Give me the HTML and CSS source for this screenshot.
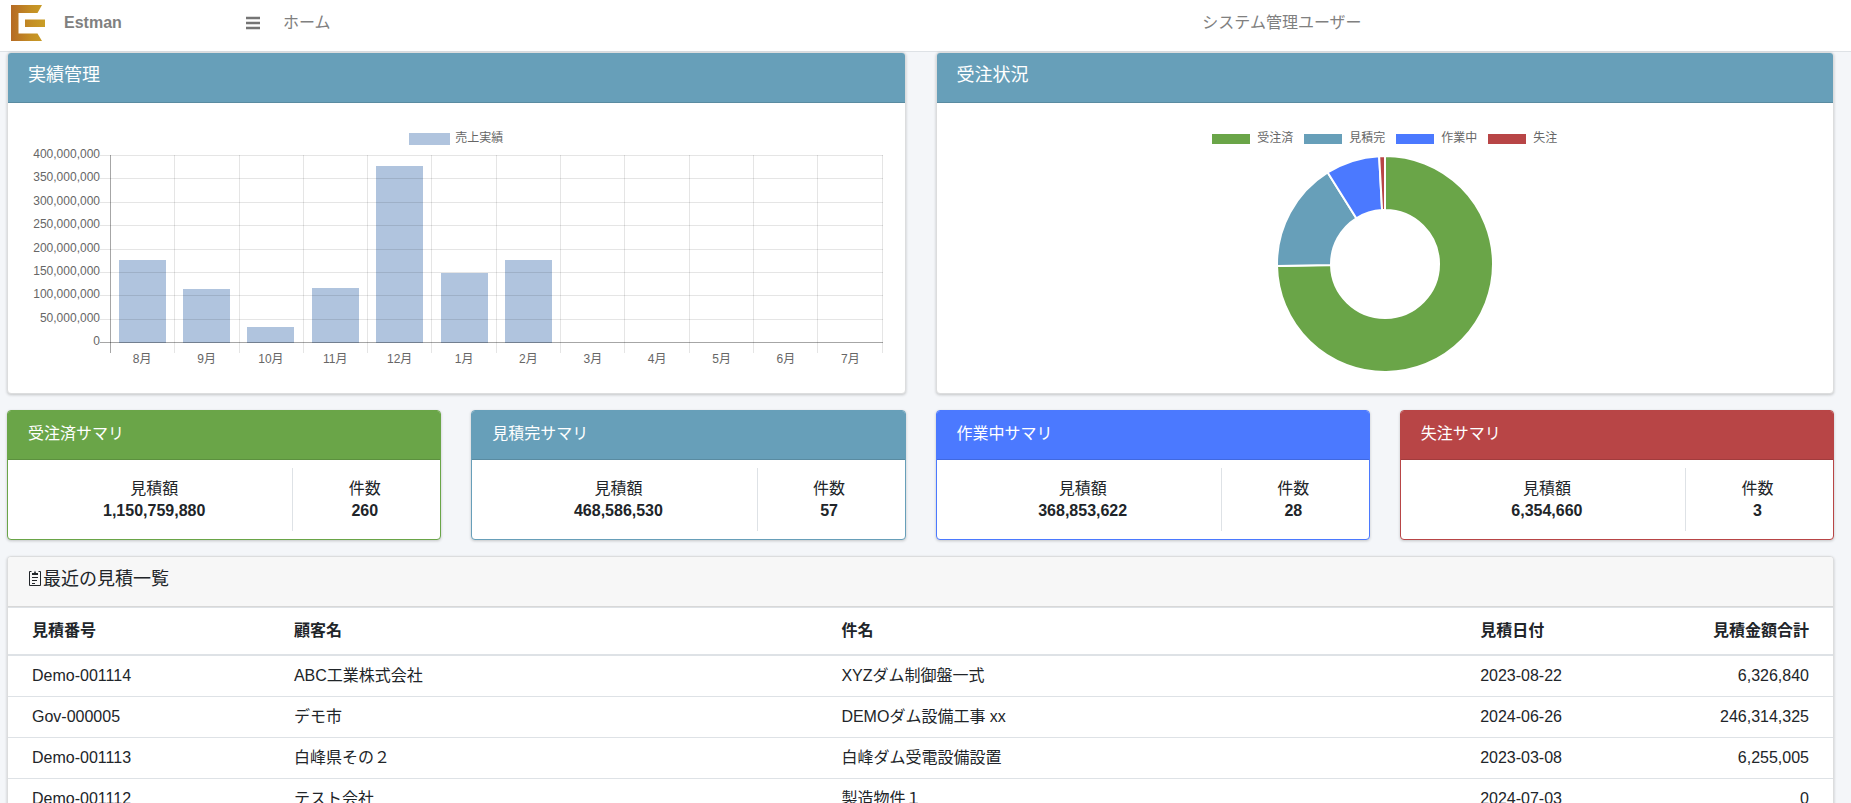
FILE: index.html
```html
<!DOCTYPE html>
<html lang="ja">
<head>
<meta charset="utf-8">
<title>Estman</title>
<link rel="stylesheet" href="styles.css">
</head>
<body>
<header class="navbar">
  <a class="brand" href="#">
    <svg class="logo" viewBox="0 0 34 36" aria-hidden="true">
      <defs><linearGradient id="gold" gradientUnits="userSpaceOnUse" x1="0" x2="34" y1="0" y2="0"><stop offset="0" stop-color="#b56a24"/><stop offset=".6" stop-color="#c48f25"/><stop offset="1" stop-color="#c99e26"/></linearGradient></defs>
      <path fill="url(#gold)" d="M0 0H31L26.500 8H7.500V28.500H26.500L31 36H0Z"/>
      <path fill="url(#gold)" d="M14 14.500H34V22H14Z"/>
    </svg>
    <span>Estman</span>
  </a>
  <button class="menu" type="button" aria-label="メニュー">
    <svg viewBox="0 0 14 14" aria-hidden="true"><path d="M0 2H14M0 7H14M0 12H14"/></svg>
  </button>
  <a class="nav-link" href="#">ホーム</a>
  <a class="nav-link user" href="#">システム管理ユーザー</a>
</header>

<main class="content">
  <div class="charts">
    <section class="card">
      <h2 class="card-header teal large">実績管理</h2>
      <div class="chart-body">
        <div class="legend"><span class="key narrow"><i class="swatch wide steel"></i>売上実績</span></div>
        <div class="bar-chart">
          <div class="y-labels"><span>400,000,000</span><span>350,000,000</span><span>300,000,000</span><span>250,000,000</span><span>200,000,000</span><span>150,000,000</span><span>100,000,000</span><span>50,000,000</span><span>0</span></div>
          <div class="bars">
            <div><i style="height:44.4%"></i></div><div><i style="height:28.9%"></i></div><div><i style="height:8.6%"></i></div><div><i style="height:29.4%"></i></div><div><i style="height:94.1%"></i></div><div><i style="height:37.2%"></i></div><div><i style="height:44.4%"></i></div><div></div><div></div><div></div><div></div><div></div>
          </div>
          <div class="h-lines"><i></i><i></i><i></i><i></i><i></i><i></i><i></i><i></i></div>
          <div class="v-lines"><i></i><i></i><i></i><i></i><i></i><i></i><i></i><i></i><i></i><i></i><i></i><i></i></div>
          <div class="x-labels"><span>8月</span><span>9月</span><span>10月</span><span>11月</span><span>12月</span><span>1月</span><span>2月</span><span>3月</span><span>4月</span><span>5月</span><span>6月</span><span>7月</span></div>
        </div>
      </div>
    </section>

    <section class="card">
      <h2 class="card-header teal large">受注状況</h2>
      <div class="chart-body">
        <div class="legend">
          <span class="key"><i class="swatch green"></i>受注済</span>
          <span class="key"><i class="swatch teal"></i>見積完</span>
          <span class="key"><i class="swatch blue"></i>作業中</span>
          <span class="key"><i class="swatch red"></i>失注</span>
        </div>
        <svg class="doughnut" viewBox="0 0 218 218" role="img" aria-label="受注状況">
          <path fill="#6aa548" d="M109 1A108 108 0 1 1 1.020 110.940L55.010 109.970A54 54 0 1 0 109 55Z"/>
          <path fill="#679fb9" d="M1.020 110.940A108 108 0 0 1 51.660 17.480L80.330 63.240A54 54 0 0 0 55.010 109.970Z"/>
          <path fill="#4b79ff" d="M51.660 17.480A108 108 0 0 1 103.160 1.160L106.080 55.080A54 54 0 0 0 80.330 63.240Z"/>
          <path fill="#b84546" d="M103.160 1.160A108 108 0 0 1 109 1V55A54 54 0 0 0 106.080 55.080Z"/>
        </svg>
      </div>
    </section>
  </div>

  <div class="summaries">
    <section class="card edge-green">
      <h2 class="card-header green">受注済サマリ</h2>
      <dl class="totals"><div><dt>見積額</dt><dd>1,150,759,880</dd></div><div><dt>件数</dt><dd>260</dd></div></dl>
    </section>
    <section class="card edge-teal">
      <h2 class="card-header teal">見積完サマリ</h2>
      <dl class="totals"><div><dt>見積額</dt><dd>468,586,530</dd></div><div><dt>件数</dt><dd>57</dd></div></dl>
    </section>
    <section class="card edge-blue">
      <h2 class="card-header blue">作業中サマリ</h2>
      <dl class="totals"><div><dt>見積額</dt><dd>368,853,622</dd></div><div><dt>件数</dt><dd>28</dd></div></dl>
    </section>
    <section class="card edge-red">
      <h2 class="card-header red">失注サマリ</h2>
      <dl class="totals"><div><dt>見積額</dt><dd>6,354,660</dd></div><div><dt>件数</dt><dd>3</dd></div></dl>
    </section>
  </div>

  <section class="card">
    <h2 class="card-header plain large">
      <svg class="clipboard" viewBox="0 0 14 17" aria-hidden="true"><path d="M3.500 1.500H1.500V15.500H12.500V1.500H10.500M4 7.500H10M4 10.500H9M4 13.500H7"/><path class="clip" d="M4 5V3H6L7 .5L8 3H10V5Z"/></svg>最近の見積一覧
    </h2>
    <table class="estimates">
      <thead><tr><th class="c-no">見積番号</th><th class="c-client">顧客名</th><th class="c-title">件名</th><th>見積日付</th><th class="num">見積金額合計</th></tr></thead>
      <tbody>
        <tr><td>Demo-001114</td><td>ABC工業株式会社</td><td>XYZダム制御盤一式</td><td>2023-08-22</td><td class="num">6,326,840</td></tr>
        <tr><td>Gov-000005</td><td>デモ市</td><td>DEMOダム設備工事 xx</td><td>2024-06-26</td><td class="num">246,314,325</td></tr>
        <tr><td>Demo-001113</td><td>白峰県その２</td><td>白峰ダム受電設備設置</td><td>2023-03-08</td><td class="num">6,255,005</td></tr>
        <tr><td>Demo-001112</td><td>テスト会社</td><td>製造物件１</td><td>2024-07-03</td><td class="num">0</td></tr>
      </tbody>
    </table>
  </section>
</main>
</body>
</html>
```
FILE: styles.css
```css
* { box-sizing: border-box; }

body {
  margin: 0;
  background: #f4f6f9;
  color: #212529;
  font: 16px/24px "Liberation Sans", "Noto Sans CJK JP", sans-serif;
}

.navbar {
  display: flex;
  align-items: center;
  height: 52px;
  padding: 0 0 6px 11px;
  background: #fff;
  border-bottom: 1px solid #dee2e6;
}
.navbar a { color: #808080; text-decoration: none; }
.brand {
  display: flex;
  align-items: center;
  gap: 19px;
  width: 235px;
  font-weight: 700;
}
.logo { width: 34px; height: 36px; }
.menu {
  display: flex;
  padding: 0;
  border: 0;
  background: none;
}
.menu svg { width: 14px; height: 14px; stroke: #757575; stroke-width: 2.400; }
.nav-link { margin-left: 23px; }
.navbar .user { margin-left: auto; margin-right: 26.6%; }

.content {
  display: flex;
  flex-direction: column;
  gap: 16px;
  padding: 0 17px 0 7px;
}
.charts { display: grid; grid-template-columns: 1fr 1fr; gap: 30px; }
.summaries { display: grid; grid-template-columns: repeat(4, 1fr); gap: 30px; }

.card {
  background: #fff;
  border: 1px solid #dcddde;
  border-radius: 4px;
  box-shadow: 0 1px 3px rgba(0, 0, 0, .2);
}
.card-header {
  height: 49px;
  margin: 0;
  padding: 11px 20px;
  border-bottom: 1px solid rgba(0, 0, 0, .125);
  border-radius: 3px 3px 0 0;
  color: #fff;
  font-size: 16px;
  font-weight: 400;
  line-height: 24px;
}
.card-header.large { height: 50px; padding-top: 9px; font-size: 18px; line-height: 26px; }
.card-header.plain { display: flex; gap: 1px; background: #f7f7f7; color: #212529; }
.clipboard { width: 14px; height: 17px; margin-top: 4px; fill: none; stroke: #212529; }
.clipboard .clip { fill: #212529; stroke: none; }

.green { background-color: #6aa548; }
.teal { background-color: #679fb9; }
.blue { background-color: #4b79ff; }
.red { background-color: #b84546; }
.steel { background-color: #b0c4de; }
.edge-green { border-color: #6aa548; }
.edge-teal { border-color: #679fb9; }
.edge-blue { border-color: #4b79ff; }
.edge-red { border-color: #b84546; }

.chart-body {
  padding-top: 28px;
  color: #666;
  font-size: 12px;
  line-height: 14px;
}
.legend {
  display: flex;
  justify-content: center;
  gap: 11px;
  height: 24px;
}
.key { display: flex; gap: 7px; }
.key.narrow { gap: 5px; }
.swatch { width: 38px; height: 10px; margin-top: 3px; }
.swatch.wide { width: 41px; height: 12px; margin-top: 2px; }

.bar-chart {
  display: grid;
  grid-template-columns: 92px 10px 1fr;
  grid-template-rows: 188px 10px auto;
  padding: 0 22px 28px 0;
}
.y-labels {
  grid-area: 1 / 1;
  display: flex;
  flex-direction: column;
  justify-content: space-between;
  margin: -11px 0 -8px;
  line-height: 20px;
  text-align: right;
}
.bars {
  grid-area: 1 / 3;
  display: grid;
  grid-template-columns: repeat(12, 1fr);
}
.bars div { display: flex; align-items: flex-end; justify-content: center; }
.bars i { width: 73%; background: #b0c4de; }
.h-lines {
  grid-area: 1 / 2 / 2 / 4;
  display: grid;
  grid-template-rows: repeat(8, 1fr);
  border-bottom: 1px solid rgba(0, 0, 0, .35);
}
.h-lines i { border-top: 1px solid rgba(0, 0, 0, .1); }
.v-lines {
  grid-area: 1 / 3 / 3 / 4;
  display: grid;
  grid-template-columns: repeat(12, 1fr);
  border-right: 1px solid rgba(0, 0, 0, .1);
}
.v-lines i { border-left: 1px solid rgba(0, 0, 0, .1); }
.v-lines i:first-child { border-color: rgba(0, 0, 0, .35); }
.x-labels {
  grid-area: 3 / 3;
  display: grid;
  grid-template-columns: repeat(12, 1fr);
  line-height: 12px;
  text-align: center;
}
.doughnut {
  display: block;
  width: 218px;
  height: 218px;
  margin: 0 auto;
  stroke: #fff;
  stroke-width: 2;
  stroke-linejoin: bevel;
}

.totals {
  display: grid;
  grid-template-columns: 66% 34%;
  margin: 0;
  padding: 8px 4px 8px 8px;
  line-height: 22px;
  text-align: center;
}
.totals div { padding: 10px 0 9px; }
.totals div:first-child { border-right: 1px solid #dee2e6; }
.totals dd { margin: 0; font-weight: 700; }

.estimates { width: 100%; border-collapse: separate; border-spacing: 0; }
.estimates th, .estimates td { padding: 8px 24px; border-bottom: 1px solid #dee2e6; text-align: left; }
.estimates th {
  padding: 11px 24px;
  border-top: 1px solid #dee2e6;
  border-bottom-width: 2px;
}
.estimates .c-no { width: 14.35%; }
.estimates .c-client { width: 30%; }
.estimates .c-title { width: 35%; }
.estimates .num { text-align: right; }
```
